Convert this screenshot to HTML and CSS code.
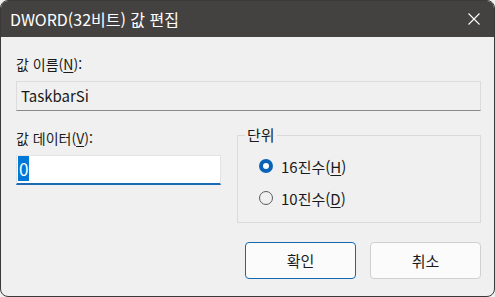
FILE: index.html
```html
<!DOCTYPE html>
<html lang="ko">
<head>
  <meta charset="UTF-8">
  <title>DWORD(32비트) 값 편집</title>
  <link rel="stylesheet" href="styles.css">
</head>
<body>
  <div class="window">
    <div class="titlebar">
      <span class="title">DWORD(32비트) 값 편집</span>
      <span class="close">
        <svg width="12" height="12" viewBox="0 0 12 12">
          <path d="M0.5 0.5 L11.5 11.5 M11.5 0.5 L0.5 11.5" stroke="#ffffff" stroke-width="1.1" fill="none"/>
        </svg>
      </span>
    </div>

    <div class="content">
      <div class="label">값 이름(<u>N</u>):</div>
      <div class="name-field">TaskbarSi</div>

      <div class="row">
        <div class="data-col">
          <div class="label data-label">값 데이터(<u>V</u>):</div>
          <div class="data-field"><span class="sel">0</span></div>
        </div>

        <fieldset class="group">
          <legend>단위</legend>
          <div class="radio">
            <span class="dot checked"></span>
            <span>16진수(<u>H</u>)</span>
          </div>
          <div class="radio">
            <span class="dot"></span>
            <span>10진수(<u>D</u>)</span>
          </div>
        </fieldset>
      </div>

      <div class="buttons">
        <button class="button default">확인</button>
        <button class="button">취소</button>
      </div>
    </div>
  </div>
</body>
</html>
```

FILE: styles.css
```css
html, body {
  margin: 0;
  padding: 0;
  background: #f0f0f0;
}
body {
  font-family: "Noto Sans CJK KR", "Noto Sans", sans-serif;
  color: #1a1a1a;
  font-size: 14px;
}
.window {
  width: 495px;
  height: 297px;
  box-sizing: border-box;
  border: 1px solid #3b3a39;
  border-radius: 8px;
  overflow: hidden;
  background: #f0f0f0;
}
.titlebar {
  height: 36px;
  background: #444240;
  color: #ffffff;
  display: flex;
  align-items: center;
  justify-content: space-between;
  padding: 0 14px 0 9px;
}
.title {
  font-size: 16px;
  line-height: 20px;
  margin-top: -1px;
}
.close {
  display: flex;
  margin-top: -1px;
}
.content {
  padding: 17px 13px 0 15px;
}
.label {
  line-height: 20px;
}
u {
  text-underline-offset: 2px;
}
.name-field {
  margin-top: 7px;
  border: 1px solid #dcdcdc;
  border-bottom-color: #8a8a8a;
  box-sizing: border-box;
  height: 30px;
  padding: 0 4px;
  line-height: 28px;
  font-size: 15px;
}
.row {
  display: flex;
  margin-top: 14px;
  gap: 16px;
}
.data-col {
  width: 205px;
  padding-top: 3px;
}
.data-field {
  margin-top: 7px;
  height: 30px;
  box-sizing: border-box;
  background: #ffffff;
  border: 1px solid #e3e3e3;
  border-bottom: 2px solid #1a6bb3;
  padding: 2px 1px;
  line-height: 22px;
  font-size: 17px;
}
.sel {
  background: #0078d7;
  color: #ffffff;
  padding: 0 1px;
}
.group {
  flex: 1;
  margin: 0;
  border: 1px solid #dadada;
  padding: 5px 0 10px 21px;
  height: 98px;
  box-sizing: border-box;
}
.group legend {
  padding: 0 2px;
  margin-left: -14px;
  line-height: 20px;
  font-size: 15px;
}
.radio {
  display: flex;
  align-items: center;
  gap: 8px;
  height: 32px;
  font-size: 15px;
}
.dot {
  width: 14px;
  height: 14px;
  box-sizing: border-box;
  border-radius: 50%;
  border: 1px solid #5c5c5c;
  display: inline-block;
}
.dot.checked {
  border: 4px solid #0b63b5;
  background: #ffffff;
}
.buttons {
  display: flex;
  justify-content: flex-end;
  gap: 14px;
  margin-top: 19px;
}
.button {
  width: 111px;
  height: 37px;
  font-family: "Noto Sans CJK KR", sans-serif;
  font-size: 15px;
  color: #1a1a1a;
  background: #fbfbfb;
  border: 1px solid #d0d0d0;
  border-radius: 4px;
}
.button.default {
  border-color: #1468b0;
}
```
